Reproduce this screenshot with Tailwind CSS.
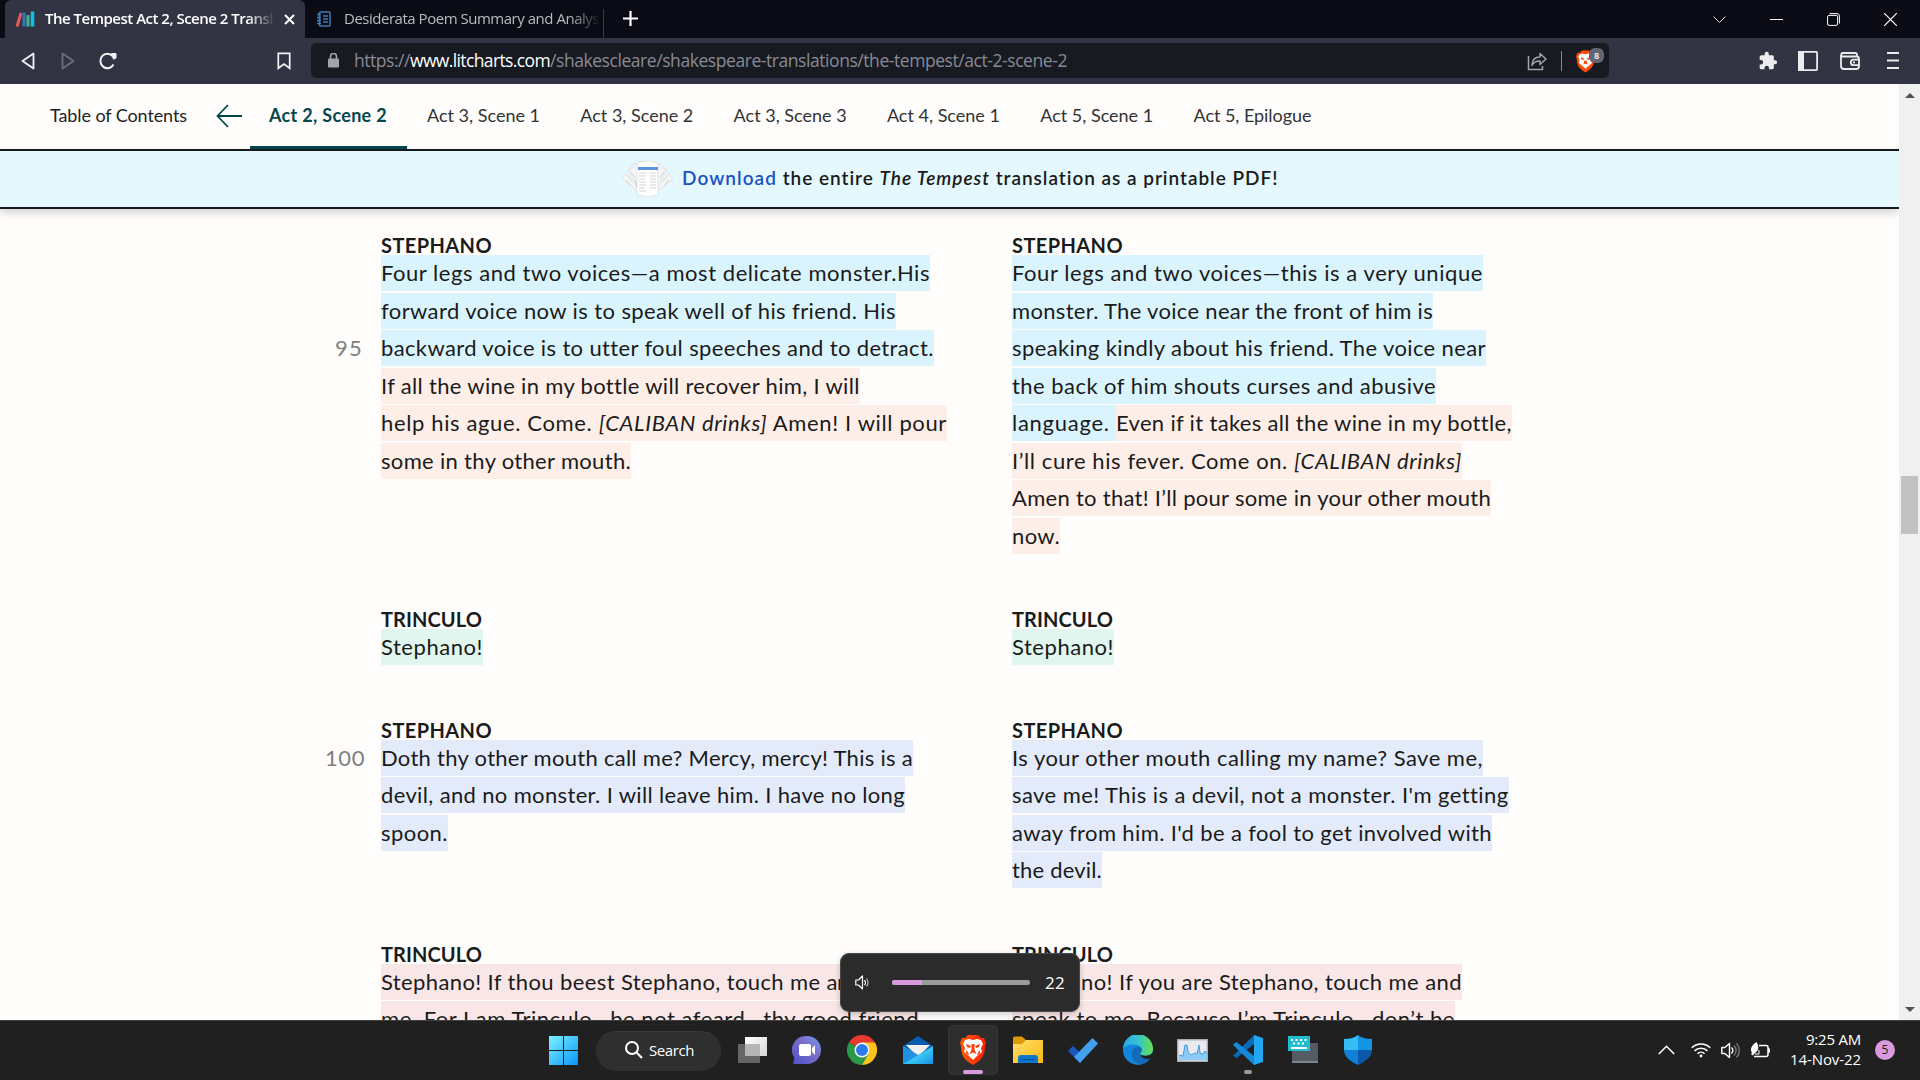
<!DOCTYPE html>
<html lang="en">
<head>
<meta charset="utf-8">
<title>The Tempest Act 2, Scene 2 Translation</title>
<script src="https://cdn.jsdelivr.net/npm/@tailwindcss/browser@4"></script>
</head>
<body class="w-[1920px] h-[1080px] overflow-hidden flex flex-col bg-[#fefdfc] font-['Open_Sans',sans-serif] relative">

<!-- tab strip -->
<header class="h-[38px] bg-[#0b0b15] flex items-end shrink-0 pl-[5px] text-[15px]">
  <div class="w-[300px] h-[38px] bg-[#323443] rounded-t-[6px] flex items-center pl-[11px]">
    <svg class="w-[19px] h-[16px] shrink-0" viewBox="0 0 19 16"><path d="M1 15.5 5 2" stroke="#e25b5b" stroke-width="3"/><path d="M8 1.500V15.500" stroke="#3f6fb5" stroke-width="3.200"/><path d="M12 4v11.500" stroke="#3cb58f" stroke-width="3.200"/><path d="M16.500.5v15" stroke="#14bfe6" stroke-width="3.600"/></svg>
    <div class="ml-[10px] -mt-[2px] w-[230px] overflow-hidden whitespace-nowrap text-white font-semibold [mask-image:linear-gradient(to_right,black_88%,transparent)]"><span data-w="228">The Tempest Act 2, Scene 2 Transl</span></div>
    <svg class="w-[11px] h-[11px] ml-[9px]" viewBox="0 0 11 11"><path d="M1 1l9 9M10 1l-9 9" stroke="#fff" stroke-width="2"/></svg>
  </div>
  <div class="w-[298px] h-[38px] flex items-center pl-[12px]">
    <svg class="w-[14px] h-[16px] shrink-0" viewBox="0 0 14 16" fill="none" stroke="#3f7cb5" stroke-width="1.500"><rect x="2.500" y="1" width="10.500" height="14" rx="1"/><path d="M0 3.500h4M0 6.500h4M0 9.500h4M0 12.500h4M6 5h5M6 8h5M6 11h5"/></svg>
    <div class="ml-[13px] -mt-[2px] w-[257px] overflow-hidden whitespace-nowrap text-[#b9bac2] [mask-image:linear-gradient(to_right,black_88%,transparent)]"><span data-w="255">Desiderata Poem Summary and Analys</span></div>
  </div>
  <div class="w-px h-[29px] bg-[#3b3c46]"></div>
  <svg class="w-[15px] h-[15px] ml-[19px] mb-[12px]" viewBox="0 0 15 15"><path d="M7.500 0v15M0 7.500h15" stroke="#fff" stroke-width="2.200"/></svg>
  <div class="ml-auto flex items-center h-[38px] gap-[44px] pr-[23px]">
    <svg class="w-[13px] h-[13px]" viewBox="0 0 13 13" fill="none" stroke="#ddd"><path d="M.5 3.500l6 6 6-6"/></svg>
    <svg class="w-[13px] h-[13px]" viewBox="0 0 13 13"><path d="M0 6.500h13" stroke="#fff"/></svg>
    <svg class="w-[13px] h-[13px]" viewBox="0 0 13 13" fill="none" stroke="#fff"><rect x=".6" y="2.400" width="10" height="10" rx="1.500"/><path d="M2.500 .6h7.500a2.400 2.400 0 0 1 2.400 2.400v7.500"/></svg>
    <svg class="w-[13px] h-[13px]" viewBox="0 0 13 13"><path d="M0 0l13 13M13 0L0 13" stroke="#fff" stroke-width="1.200"/></svg>
  </div>
</header>

<!-- toolbar -->
<div class="h-[46px] bg-[#323443] flex items-center shrink-0 pl-[21px] pb-[1px]">
  <svg class="w-[14px] h-[18px]" viewBox="0 0 14 18" fill="none" stroke="#f4f4f6" stroke-width="1.800" stroke-linejoin="round"><path d="M12.500 1.500v15L1.500 9z"/></svg>
  <svg class="w-[14px] h-[18px] ml-[26px]" viewBox="0 0 14 18" fill="none" stroke="#6c6d7a" stroke-width="1.800" stroke-linejoin="round"><path d="M1.500 1.500v15L12.500 9z"/></svg>
  <svg class="w-[19px] h-[18px] ml-[24px]" viewBox="0 0 19 18" fill="none" stroke="#f4f4f6" stroke-width="2"><path d="M14.500 12.500A7 7.200 0 1 1 13.500 4"/><path d="M12.500 1.500l4.500 0 0 4.500-2.500 1.200z" fill="#f4f4f6" stroke-width="1"/></svg>
  <svg class="w-[14px] h-[18px] ml-[159px]" viewBox="0 0 14 18" fill="none" stroke="#f4f4f6" stroke-width="1.700"><path d="M1.300 1.300h11.400v15L7 12l-5.700 4.300z"/></svg>
  <div class="ml-[20px] w-[1298px] h-[35px] bg-[#171a21] rounded-[5px] flex items-center pl-[17px]">
    <svg class="w-[11px] h-[15px]" viewBox="0 0 11 15"><rect y="5.500" width="11" height="9" rx="1" fill="#a2a4ac"/><path d="M2.500 6V3.500a3 3 0 0 1 6 0V6" fill="none" stroke="#a2a4ac" stroke-width="1.600"/></svg>
    <div class="ml-[15px] -mt-[2px] text-[17.5px] leading-[24px] whitespace-nowrap text-[#898b94]"><span data-w="56">https://</span><span data-w="140" class="text-white">www.litcharts.com</span><span data-w="517">/shakescleare/shakespeare-translations/the-tempest/act-2-scene-2</span></div>
    <div class="ml-auto flex items-center pr-[5px]">
      <svg class="w-[20px] h-[20px]" viewBox="0 0 20 20" fill="none" stroke="#a2a4ac" stroke-width="1.500"><path d="M1.500 5v13.500h14V15"/><path d="M5 14.500c0-6 3-8.500 8-8.500V2.500l6 5.500-6 5.500V10c-4 0-6.500 1-8 4.500z" stroke-linejoin="round"/></svg>
      <div class="w-px h-[20px] bg-[#8a8c94] ml-[14px]"></div>
      <div class="relative w-[28px] h-[25px] ml-[14px]">
        <svg class="w-[19px] h-[23px] mt-[2px]" viewBox="0 0 26 30"><path d="M8 0h10l3 3 3 0 2 5-1 3c0 9-3 14-12 19C4 25 1 20 1 11L0 8l2-5h3z" fill="#fb4b0a"/><path d="M13 5l4-1 4 1 2 4-2 4 1 4-5 4-4 4-4-4-5-4 1-4-2-4 2-4 4-1z" fill="#fff"/><path d="M7 9l4 2-1 2-3-1zM19 9l-4 2 1 2 3-1zM11 14h4v3l2 2-4-1-4 1 2-2z" fill="#fb4b0a"/></svg>
        <div class="absolute left-[13px] top-0 w-[15px] h-[15px] rounded-[6px] bg-[#636573] text-white text-[9px] font-semibold leading-[15px] text-center">8</div>
      </div>
    </div>
  </div>
  <div class="ml-auto flex items-center pr-[21px]">
    <svg class="w-[20px] h-[20px]" viewBox="0 0 24 24" fill="#ececee"><path d="M20.500 11H19V7a2 2 0 0 0-2-2h-4V3.500a2.500 2.500 0 0 0-5 0V5H4a2 2 0 0 0-2 2v3.800h1.500a2.700 2.700 0 0 1 0 5.400H2V20a2 2 0 0 0 2 2h3.800v-1.500a2.700 2.700 0 0 1 5.400 0V22H17a2 2 0 0 0 2-2v-4h1.500a2.500 2.500 0 0 0 0-5z"/></svg>
    <svg class="w-[20px] h-[20px] ml-[20px]" viewBox="0 0 20 20"><rect x=".9" y=".9" width="18.200" height="18.200" rx="1" fill="none" stroke="#ececee" stroke-width="1.800"/><path d="M0 0h6v20H0z" fill="#ececee"/></svg>
    <svg class="w-[20px] h-[18px] ml-[22px]" viewBox="0 0 20 18" fill="none" stroke="#ececee" stroke-width="1.800"><path d="M1 3v11a3 3 0 0 0 3 3h12a3 3 0 0 0 3-3V7a2.500 2.500 0 0 0-2.500-2.500H3A1.700 1.700 0 0 1 3 1h12c1 0 2 .8 2 1.800V4"/><path d="M19 7.700h-5.500a2.700 2.700 0 0 0 0 5.400H19"/><path d="M13 10.400h2"/></svg>
    <svg class="w-[12px] h-[17px] ml-[27px]" viewBox="0 0 12 17"><path d="M0 1h12M0 8.500h12M0 16h12" stroke="#ececee" stroke-width="1.800"/></svg>
  </div>
</div>

<div class="flex h-[936px] overflow-hidden shrink-0 font-[Lato,sans-serif] text-[#1a1b1b]">
  <div class="w-[1899px] flex flex-col shrink-0">
    <!-- scene navigation -->
    <nav class="h-[65px] flex shrink-0 pl-[50px] text-[18px] leading-[63px] whitespace-nowrap text-[#333]">
      <span class="w-[166px] text-[#222]"><span data-w="137">Table of Contents</span></span>
      <svg class="w-[26px] h-[24px] mt-[20px]" viewBox="0 0 26 24" fill="none" stroke="#05464c" stroke-width="1.800"><path d="M12 1L1.500 12 12 23M1.500 12H26"/></svg>
      <span class="w-[157px] ml-[8px] h-[65px] border-b-3 border-[#05464c] pl-[19px] text-[#05464c] font-bold"><span data-w="118">Act 2, Scene 2</span></span>
      <span class="w-[153.300px] ml-[20px]"><span data-w="113">Act 3, Scene 1</span></span>
      <span class="w-[153.300px]"><span data-w="113">Act 3, Scene 2</span></span>
      <span class="w-[153.300px]"><span data-w="113">Act 3, Scene 3</span></span>
      <span class="w-[153.300px]"><span data-w="113">Act 4, Scene 1</span></span>
      <span class="w-[153.300px]"><span data-w="113">Act 5, Scene 1</span></span>
      <span><span data-w="118">Act 5, Epilogue</span></span>
    </nav>
    <!-- download banner -->
    <div class="h-[60px] shrink-0 border-y-2 border-[#14191b] bg-[#e5f8fd] shadow-[0_4px_8px_rgba(0,0,0,0.16)] flex items-center pl-[622px] text-[19px] font-semibold whitespace-nowrap">
      <svg class="w-[51px] h-[38px]" viewBox="0 0 51 38"><g fill="#f5f5f6" stroke="#d5d7da" stroke-width=".6"><path d="M0 19L12 3l14 8-8 22z"/><path d="M51 19L39 3 25 11l8 22z"/><path d="M7 11L18 1l8 14-7 21z"/><path d="M44 11L33 1l-8 14 7 21z"/><path d="M15 3l10-2 11 2v32l-10 2-11-2z" fill="#fff"/></g><path d="M16 7h20v3H16z" fill="#5b93dc"/><path d="M17 13h7M17 16h7M17 19h6M17 22h7M17 25h7M17 28h6M17 31h7M28 13h6M28 16h6M28 19h6M28 22h6M28 25h6M28 28h6M5 15l5 6M9 12l4 6M46 15l-5 6M42 12l-4 6M4 20l5 6M13 20l2 7M47 20l-5 6" stroke="#c5c8cd" stroke-width=".8"/></svg>
      <div class="ml-[9px] leading-[54px] -mt-[2px]"><span data-w="95" class="text-[#1a50c4]">Download</span><span data-w="502"> the entire <i>The Tempest</i> translation as a printable PDF!</span></div>
    </div>

    <!-- original text beside its translation -->
    <main id="play" class="pt-[18px] pl-[322px] flex flex-col text-[22px]"></main>
  </div>
  <!-- scrollbar -->
  <div class="w-[21px] bg-[#f1f0f0] flex flex-col items-center pt-[9px] pb-[8px]">
    <svg class="w-[10px] h-[5px]" viewBox="0 0 10 5"><path d="M0 5L5 0l5 5z" fill="#505050"/></svg>
    <div class="w-[17px] h-[58px] bg-[#c1c1c1] mt-[378px]"></div>
    <svg class="w-[10px] h-[5px] mt-auto" viewBox="0 0 10 5"><path d="M0 0l5 5 5-5z" fill="#505050"/></svg>
  </div>
</div>

<!-- taskbar -->
<footer class="h-[60px] bg-[#202020] border-t border-[#41423f] flex items-center shrink-0 pl-[549px] text-white">
  <svg class="w-[29px] h-[29px]" viewBox="0 0 29 29"><defs><linearGradient id="win" x1="0" y1="0" x2="1" y2="1"><stop stop-color="#7df3ff"/><stop offset="1" stop-color="#0a93f7"/></linearGradient></defs><path d="M0 0h14v14H0zM15 0h14v14H15zM0 15h14v14H0zM15 15h14v14H15z" fill="url(#win)"/></svg>
  <div class="ml-[18px] w-[125px] h-[40px] rounded-full bg-[#2f2f2f] border-t border-[#3a3a3a] flex items-center pl-[29px] text-[15px]">
    <svg class="w-[18px] h-[18px] -mt-[2px]" viewBox="0 0 18 18" fill="none" stroke="#fff" stroke-width="2"><circle cx="7" cy="7" r="6"/><path d="M11.500 11.500L17 17"/></svg>
    <span class="ml-[6px] -mt-[2px]" data-w="45">Search</span>
  </div>
  <div class="flex items-center -mt-px">
    <div class="w-[55px] ml-[3px] flex justify-center"><svg class="w-[30px] h-[30px]" viewBox="0 0 30 30"><defs><linearGradient id="tv" x1="0" y1="0" x2="1" y2="1"><stop stop-color="#fff"/><stop offset="1" stop-color="#d5d5d5"/></linearGradient></defs><path d="M1 9h22v19H1z" fill="#666"/><path d="M8 2h22v19H8z" fill="url(#tv)"/><path d="M8 9h15v12H8z" fill="#b5b5b5"/></svg></div>
    <div class="w-[55px] flex justify-center"><svg class="w-[30px] h-[30px]" viewBox="0 0 30 30"><defs><linearGradient id="ch" x1="1" y1="0" x2="0" y2="1"><stop stop-color="#6f9cf0"/><stop offset=".4" stop-color="#7a6fcb"/><stop offset="1" stop-color="#5050c8"/></linearGradient></defs><path d="M15 1a14 14 0 1 1 0 28H1l1.500-6A14 14 0 0 1 15 1z" fill="url(#ch)"/><rect x="7" y="9" width="12" height="12" rx="2" fill="#fff"/><path d="M20 13l3-3v10l-3-3z" fill="#fff"/></svg></div>
    <div class="w-[56px] flex justify-center"><svg class="w-[30px] h-[30px]" viewBox="0 0 30 30"><path d="M15 15L2 7.500A15 15 0 0 1 28 7.500z" fill="#e53a2f"/><path d="M15 15L2 7.500A15 15 0 0 0 15 30l6.500-11z" fill="#2a9a48"/><path d="M15 30A15 15 0 0 0 28 7.500H15l6.500 11.200z" fill="#fbc41c"/><circle cx="15" cy="15" r="7.500" fill="#fff"/><circle cx="15" cy="15" r="6" fill="#2c7cf0"/></svg></div>
    <div class="w-[55px] flex justify-center"><svg class="w-[30px] h-[30px]" viewBox="0 0 30 30"><defs><linearGradient id="ml" x1="0" y1="0" x2="1" y2="1"><stop stop-color="#1478d0"/><stop offset=".55" stop-color="#36c6f4"/><stop offset="1" stop-color="#1c8ee2"/></linearGradient></defs><path d="M0 11L15 1l15 10v5H0z" fill="#0a5cae"/><path d="M3 10h24l-12 12z" fill="#f0f0f0"/><path d="M0 11l15 9 15-9v18H0z" fill="url(#ml)"/><path d="M0 11l15 9L0 29z" fill="#1f92e0"/></svg></div>
    <div class="w-[55px] flex justify-center"><div class="w-[50px] h-[50px] rounded-[5px] bg-[#2e2e2e] border border-[#373737] flex flex-col items-center pt-[9px]">
      <svg class="w-[26px] h-[30px]" viewBox="0 0 26 30"><defs><linearGradient id="br"><stop stop-color="#ff5a00"/><stop offset="1" stop-color="#ff1f0a"/></linearGradient></defs><path d="M8 0h10l3 3 3 0 2 5-1 3c0 9-3 14-12 19C4 25 1 20 1 11L0 8l2-5h3z" fill="url(#br)"/><path d="M13 5l4-1 4 1 2 4-2 4 1 4-5 4-4 4-4-4-5-4 1-4-2-4 2-4 4-1z" fill="#fff"/><path d="M6 9l5 2-1 2-3-1zM20 9l-5 2 1 2 3-1zM11.500 9h3v6l2 4-3.500-1.500L9.500 19l2-4zM6 15l3 4-1 1-2-2zM20 15l-3 4 1 1 2-2z" fill="#fb3d08"/></svg>
      <div class="w-[20px] h-[4px] rounded-full bg-[#d99ae0] mt-[5px]"></div></div></div>
    <div class="w-[55px] flex justify-center"><svg class="w-[30px] h-[28px]" viewBox="0 0 30 28"><defs><linearGradient id="ex" x1="0" y1="0" x2="1" y2="1"><stop stop-color="#ffdf70"/><stop offset="1" stop-color="#fcb80e"/></linearGradient></defs><path d="M0 2a1.500 1.500 0 0 1 1.500-1.500H9L13 4v6H0z" fill="#dc9a08"/><path d="M0 8h9l4-4h17v23H0z" fill="url(#ex)"/><path d="M5 27v-5a3 3 0 0 1 3-3h14a3 3 0 0 1 3 3v5z" fill="#0a76d0"/><path d="M8.500 23.500h13" stroke="#04508f" stroke-width="1.300"/></svg></div>
    <div class="w-[55px] flex justify-center"><svg class="w-[30px] h-[26px]" viewBox="0 0 30 26"><path d="M0 14l5-5 12 11-5 6z" fill="#1c57c0"/><path d="M24.500 1L30 6.500 12 26l-6-6z" fill="#42a0ee"/></svg></div>
    <div class="w-[55px] flex justify-center"><svg class="w-[30px] h-[30px]" viewBox="0 0 30 30"><defs><linearGradient id="ed"><stop stop-color="#2aa6e6"/><stop offset=".5" stop-color="#34c4d0"/><stop offset="1" stop-color="#67e04c"/></linearGradient></defs><circle cx="15" cy="15" r="15" fill="#1668b8"/><path d="M0 14A15 15 0 0 1 30 14c0 5-4 7-8 7-3 0-5-1-5-2s2-2 2-4c0-3-4-5-8-5-6 0-10 3-11 4z" fill="url(#ed)"/><path d="M0 14c3-5 12-6 17-2-5-1-9 3-8 9 1 5 5 8 10 8A15 15 0 0 1 0 14z" fill="#1186dc"/><path d="M17.500 19c1 2 8 3 12-1l1 3-1.500 2c-3 1.500-6 1-8.500 0-2-1-3-2-3-4z" fill="#202020"/></svg></div>
    <div class="w-[55px] flex justify-center"><svg class="w-[31px] h-[23px]" viewBox="0 0 31 23"><rect x=".7" y=".7" width="29.600" height="21.600" fill="#e8eaee" stroke="#a9acb3" stroke-width="1.400"/><path d="M2 16l4 1 2-11 2 0 1 7 3 3 4-2 2 1 2-9 1 8 3 1 2-3 2 3v6H2z" fill="#8dcbf7"/><path d="M2 16l4 1 2-11 2 0 1 7 3 3 4-2 2 1 2-9 1 8 3 1 2-3 2 3" fill="none" stroke="#3fa0e8"/></svg></div>
    <div class="w-[55px] h-[50px] flex flex-col items-center pt-[10px]"><svg class="w-[30px] h-[30px]" viewBox="0 0 30 30"><path d="M21 0l-18 18-3 2.500 3.500 2.500L21 9z" fill="#0a6cb8"/><path d="M0 9.500L3.500 7 21 21v9L3 13z" fill="#1588d8"/><path d="M21 0l9 3v24l-9 3z" fill="#24a6f2"/></svg><div class="w-[8px] h-[4px] rounded-full bg-[#9a9a9a] mt-[5px]"></div></div>
    <div class="w-[55px] flex justify-center"><svg class="w-[30px] h-[28px]" viewBox="0 0 30 28"><path d="M4 7h26v20H4z" fill="#555b63"/><path d="M4 25h26v2H4z" fill="#80868e"/><path d="M0 0h22v15H0z" fill="#22bcd0"/><path d="M3 4h16" stroke="#fff" stroke-width="2" stroke-dasharray="2 2.500"/><path d="M5 7.500h12" stroke="#fff" stroke-width="2" stroke-dasharray="2 2.500"/><path d="M3 12h16" stroke="#fff" stroke-width="2"/></svg></div>
    <div class="w-[55px] flex justify-center"><svg class="w-[28px] h-[30px]" viewBox="0 0 28 30"><path d="M14 0c4 3 9 4 14 4v11H14z" fill="#1394e4"/><path d="M14 0C10 3 5 4 0 4v11h14z" fill="#35bdf5"/><path d="M0 15h14v15C5 26 0 21 0 15z" fill="#0f7fd8"/><path d="M28 15H14v15c9-4 14-9 14-15z" fill="#0b58a8"/></svg></div>
  </div>
  <div class="ml-auto flex items-center pr-[25px] -mt-px">
    <svg class="w-[17px] h-[10px]" viewBox="0 0 17 10" fill="none" stroke="#fff" stroke-width="1.500"><path d="M.8 9L8.500 1.200 16.200 9"/></svg>
    <svg class="w-[20px] h-[16px] ml-[16px]" viewBox="0 0 20 16" fill="none" stroke="#fff" stroke-width="1.600"><path d="M.8 5.800a13 13 0 0 1 18.400 0M3.600 8.900a9 9 0 0 1 12.800 0M6.500 11.700a5 5 0 0 1 7 0"/><circle cx="10" cy="14" r="1.400" fill="#fff" stroke="none"/></svg>
    <svg class="w-[20px] h-[17px] ml-[10px]" viewBox="0 0 20 17" fill="none" stroke="#fff" stroke-width="1.400"><path d="M.8 5.500h3L8.500 1.500v14L3.800 11.500h-3z" stroke-linejoin="round"/><path d="M10.500 5.500a4 4 0 0 1 0 6"/><path d="M13 3.500a7 7 0 0 1 0 10M15.500 1.500a10 10 0 0 1 0 14" stroke="#777"/></svg>
    <svg class="w-[20px] h-[17px] ml-[9px]" viewBox="0 0 20 17"><path d="M9 3.500h7a2 2 0 0 1 2 2v7a2 2 0 0 1-2 2H4" fill="none" stroke="#fff" stroke-width="1.500"/><path d="M18 6.500h2v4h-2z" fill="#fff"/><path d="M6.500 0c2 3 3 8-1 10.500l-3 3-1.500-1.500 1-1C-.5 7 1.500 3.500 6.500 0z" fill="#fff"/><path d="M9 8v4H5" stroke="#fff" fill="none"/></svg>
    <div class="w-[91px] -mt-[3px] text-right text-[15px] leading-[20px] whitespace-nowrap"><div><span data-w="55">9:25 AM</span></div><div><span data-w="71">14-Nov-22</span></div></div>
    <div class="ml-[14px] w-[20px] h-[20px] rounded-full bg-[#d99ae0] text-[#222] text-[12px] leading-[20px] text-center">5</div>
  </div>
</footer>

<!-- volume flyout -->
<div class="absolute left-[840px] top-[953px] w-[240px] h-[59px] rounded-[9px] bg-[#2b2b2b] border border-[#484848] shadow-[0_2px_6px_rgba(0,0,0,0.2)] flex items-center pl-[14px] text-white">
  <svg class="w-[14px] h-[15px]" viewBox="0 0 14 15" fill="none" stroke="#fff" stroke-width="1.200"><path d="M.8 5h2.700L7.500 1v13L3.500 10H.8z" stroke-linejoin="round"/><path d="M9.500 5a4 4 0 0 1 0 5" /><path d="M11.500 3.500a6.500 6.500 0 0 1 0 8" stroke="#bbb"/></svg>
  <div class="ml-[23px] w-[138px] h-[5px] rounded-full bg-[#9c9c9c]"><div class="w-[30px] h-[5px] rounded-l-full bg-[#d99ae0]"></div></div>
  <span class="ml-[15px] text-[17px]" data-w="20">22</span>
</div>

<script>
const tint = {cyan:'bg-[#daf4fd]', peach:'bg-[#feeee8]', mint:'bg-[#e0f6ee]', blue:'bg-[#e3ebfa]', rose:'bg-[#f9e6e7]'};
// Each line is a list of runs: [tint, width, text]; original on the left, translation on the right.
const speeches = [
 {who:'STEPHANO', num:{2:'95'},
  a:[[['cyan',549,'Four legs and two voices—a most delicate monster.His']],[['cyan',515,'forward voice now is to speak well of his friend. His']],[['cyan',552,'backward voice is to utter foul speeches and to detract.']],[['peach',478,'If all the wine in my bottle will recover him, I will']],[['peach',566,'help his ague. Come. <i>[CALIBAN drinks]</i> Amen! I will pour']],[['peach',250,'some in thy other mouth.']]],
  b:[[['cyan',471,'Four legs and two voices—this is a very unique']],[['cyan',421,'monster. The voice near the front of him is']],[['cyan',474,'speaking kindly about his friend. The voice near']],[['cyan',424,'the back of him shouts curses and abusive']],[['cyan',104,'language. '],['peach',395,'Even if it takes all the wine in my bottle,']],[['peach',450,'I’ll cure his fever. Come on. <i>[CALIBAN drinks]</i>']],[['peach',479,'Amen to that! I’ll pour some in your other mouth']],[['peach',48,'now.']]]},
 {who:'TRINCULO', num:{}, a:[[['mint',102,'Stephano!']]], b:[[['mint',102,'Stephano!']]]},
 {who:'STEPHANO', num:{0:'100'},
  a:[[['blue',532,'Doth thy other mouth call me? Mercy, mercy! This is a']],[['blue',524,'devil, and no monster. I will leave him. I have no long']],[['blue',67,'spoon.']]],
  b:[[['blue',471,'Is your other mouth calling my name? Save me,']],[['blue',496,"save me! This is a devil, not a monster. I'm getting"]],[['blue',480,"away from him. I'd be a fool to get involved with"]],[['blue',90,'the devil.']]]},
 {who:'TRINCULO', num:{},
  a:[[['rose',445.5,'Stephano! If thou beest Stephano, touch me '],['rose',118,'and speak to']],[['rose',538,'me. For I am Trinculo—be not afeard—thy good friend']]],
  b:[[['rose',450,'Stephano! If you are Stephano, touch me and']],[['rose',443,'speak to me. Because I’m Trinculo—don’t be']]]}
];
const line = runs => '<div class="h-[37.5px] flex whitespace-pre">' + runs.map(([c,w,t]) => `<div class="${tint[c]} h-[36px] leading-[36px]"><span data-w="${w}">${t}</span></div>`).join('') + '</div>';
const name = n => `<h3 class="h-[28px] text-[20px] leading-[36px] font-bold"><span data-w="${n === 'STEPHANO' ? 111 : 101}">${n}</span></h3>`;
document.getElementById('play').innerHTML = speeches.map(s => `<section class="flex mb-[45.7px]">
  <div class="w-[59px] pt-[28px] text-[#7d7f80]">${s.a.map((_,i) => `<div class="h-[37.5px] leading-[36px] ${s.num[i] === '100' ? 'pl-[3px]' : 'pl-[13px]'}">${s.num[i] ? `<span data-w="${s.num[i] === '100' ? 40 : 28}">${s.num[i]}</span>` : ''}</div>`).join('')}</div>
  <div class="w-[631px]">${name(s.who)}${s.a.map(line).join('')}</div>
  <div>${name(s.who)}${s.b.map(line).join('')}</div></section>`).join('');
// Track each run out to its measure, once styles and fonts are in.
function fit() {
  const runs = [...document.querySelectorAll('[data-w]')];
  runs.forEach(e => e.style.letterSpacing = '0px');
  const widths = runs.map(e => e.getBoundingClientRect().width);
  runs.forEach((e, i) => e.style.letterSpacing = ((e.dataset.w - widths[i]) / e.textContent.length).toFixed(3) + 'px');
}
fit();
addEventListener('load', fit);
document.fonts.ready.then(fit);
</script>
</body>
</html>
